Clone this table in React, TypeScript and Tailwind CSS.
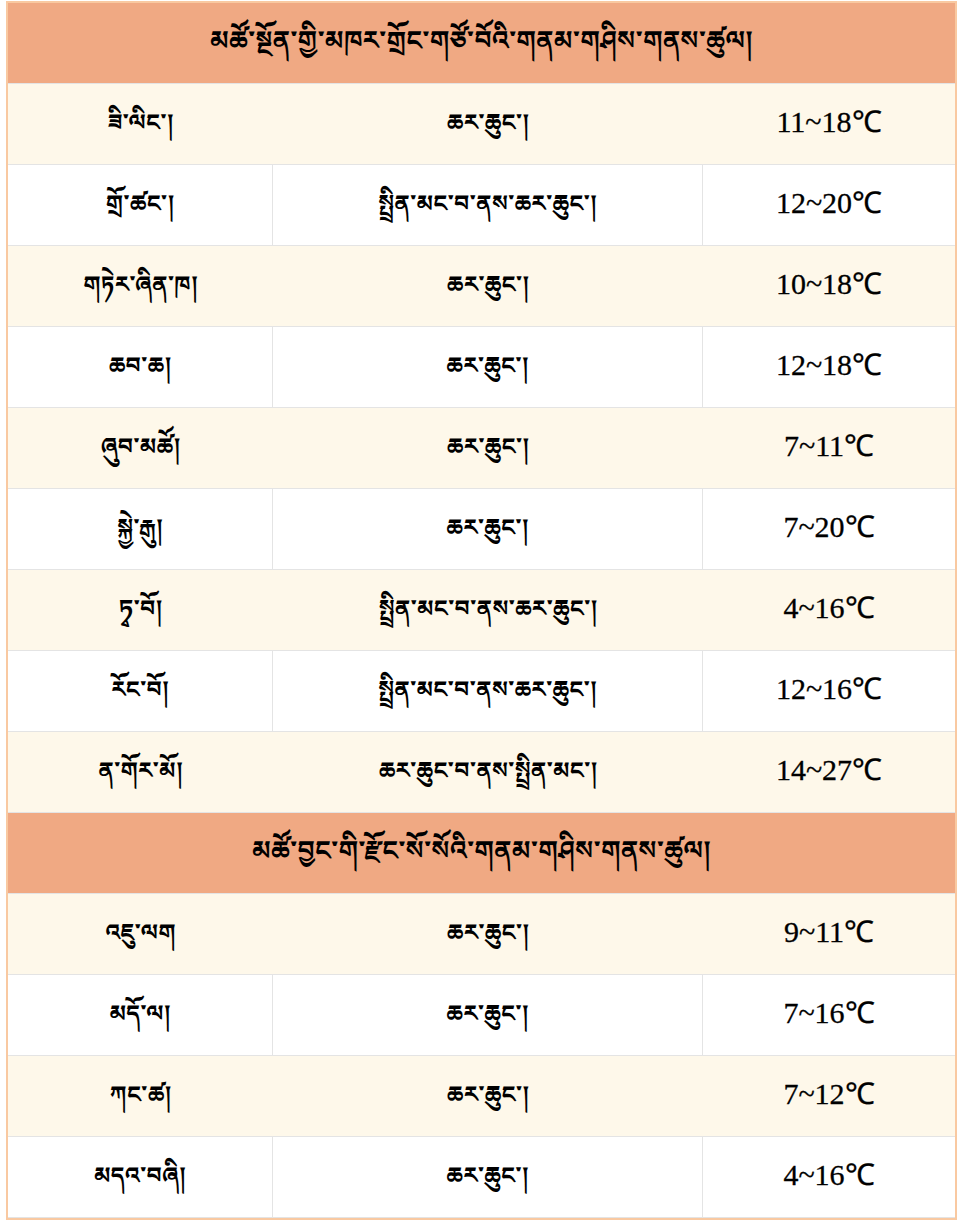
const sections = [
  {
    title: "མཚོ་སྔོན་གྱི་མཁར་གྲོང་གཙོ་བོའི་གནམ་གཤིས་གནས་ཚུལ།",
    rows: [
      ["ཟི་ལིང་།", "ཆར་ཆུང་།", "11~18℃"],
      ["གྲོ་ཚང་།", "སྤྲིན་མང་བ་ནས་ཆར་ཆུང་།", "12~20℃"],
      ["གཏེར་ཞིན་ཁ།", "ཆར་ཆུང་།", "10~18℃"],
      ["ཆབ་ཆ།", "ཆར་ཆུང་།", "12~18℃"],
      ["ཞུབ་མཚོ།", "ཆར་ཆུང་།", "7~11℃"],
      ["སྐྱེ་རྒུ།", "ཆར་ཆུང་།", "7~20℃"],
      ["ཏྭ་བོ།", "སྤྲིན་མང་བ་ནས་ཆར་ཆུང་།", "4~16℃"],
      ["རོང་བོ།", "སྤྲིན་མང་བ་ནས་ཆར་ཆུང་།", "12~16℃"],
      ["ན་གོར་མོ།", "ཆར་ཆུང་བ་ནས་སྤྲིན་མང་།", "14~27℃"],
    ],
  },
  {
    title: "མཚོ་བྱང་གི་རྫོང་སོ་སོའི་གནམ་གཤིས་གནས་ཚུལ།",
    rows: [
      ["འཇུ་ལག", "ཆར་ཆུང་།", "9~11℃"],
      ["མདོ་ལ།", "ཆར་ཆུང་།", "7~16℃"],
      ["ཀང་ཚ།", "ཆར་ཆུང་།", "7~12℃"],
      ["མདའ་བཞི།", "ཆར་ཆུང་།", "4~16℃"],
    ],
  },
];

const tibetan =
  "font-['Noto_Serif_Tibetan','Noto_Sans_Tibetan','Jomolhari','Microsoft_Himalaya','Liberation_Serif',serif]";

export default function App() {
  return (
    <div className="w-[962px] min-h-[1222px] bg-white pt-px">
      <div className="ml-[6px] w-[951px] border-2 border-[#f9c9a1] text-black">
        {sections.map((section) => (
          <div key={section.title}>
            <div
              className={`h-[81px] flex items-center justify-center pt-[8px] bg-[#f0a983] border-b border-[#e4e4e4] text-[26px] font-bold ${tibetan}`}
            >
              {section.title}
            </div>
            {section.rows.map((row, i) => {
              const cream = i % 2 === 0;
              return (
                <div
                  key={row[0]}
                  className={`h-[81px] grid grid-cols-[265px_430px_1fr] border-b border-[#e4e4e4] ${
                    cream ? "bg-[#fef8ea]" : "bg-white"
                  }`}
                >
                  <div
                    className={`flex items-center justify-center pt-[10px] text-[23px] font-bold ${tibetan} ${
                      cream ? "" : "border-r border-[#e4e4e4]"
                    }`}
                  >
                    {row[0]}
                  </div>
                  <div
                    className={`flex items-center justify-center pt-[10px] text-[23px] font-bold ${tibetan} ${
                      cream ? "" : "border-r border-[#e4e4e4]"
                    }`}
                  >
                    {row[1]}
                  </div>
                  <div className="flex items-center justify-center pb-[5px] text-[30px] font-['Liberation_Serif',serif] [-webkit-text-stroke:0.3px_black]">
                    {row[2]}
                  </div>
                </div>
              );
            })}
          </div>
        ))}
      </div>
    </div>
  );
}
